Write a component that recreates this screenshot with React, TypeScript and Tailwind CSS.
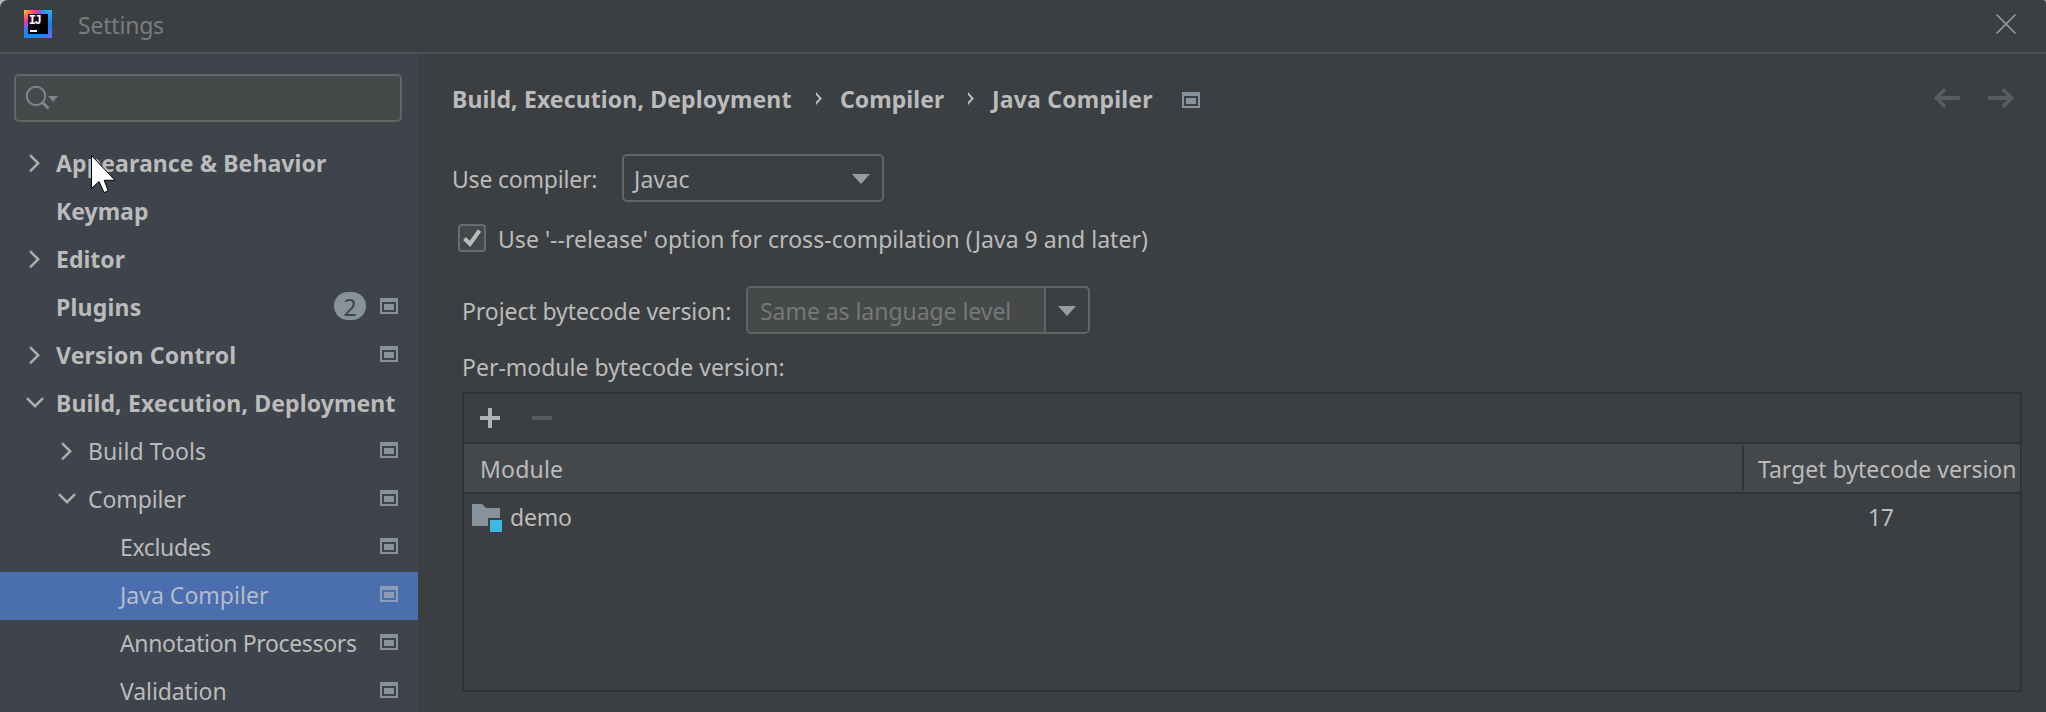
import type { ReactNode } from 'react';

type TreeItem = {
  label: string;
  level: 0 | 1 | 2;
  arrow?: 'right' | 'down';
  badge?: string;
  project?: boolean;
  selected?: boolean;
  tracking: string;
};

const tree: TreeItem[] = [
  { label: 'Appearance & Behavior', level: 0, arrow: 'right', tracking: 'tracking-[0.1px]' },
  { label: 'Keymap', level: 0, tracking: 'tracking-normal' },
  { label: 'Editor', level: 0, arrow: 'right', tracking: 'tracking-normal' },
  { label: 'Plugins', level: 0, badge: '2', project: true, tracking: 'tracking-[0.2px]' },
  { label: 'Version Control', level: 0, arrow: 'right', project: true, tracking: 'tracking-[0.2px]' },
  { label: 'Build, Execution, Deployment', level: 0, arrow: 'down', tracking: 'tracking-[0.12px]' },
  { label: 'Build Tools', level: 1, arrow: 'right', project: true, tracking: 'tracking-[0.1px]' },
  { label: 'Compiler', level: 1, arrow: 'down', project: true, tracking: 'tracking-[-0.1px]' },
  { label: 'Excludes', level: 2, project: true, tracking: 'tracking-[-0.35px]' },
  { label: 'Java Compiler', level: 2, project: true, selected: true, tracking: 'tracking-[0.02px]' },
  { label: 'Annotation Processors', level: 2, project: true, tracking: 'tracking-[-0.35px]' },
  { label: 'Validation', level: 2, project: true, tracking: 'tracking-[-0.1px]' },
];

const indent = ['pl-6', 'pl-14', 'pl-[88px]'];

function ProjectIcon({ className = 'text-[#87939a]' }: { className?: string }) {
  return (
    <svg width="18" height="16" viewBox="0 0 18 16" fill="currentColor" shapeRendering="crispEdges" className={`block shrink-0 ${className}`}>
      <path fillRule="evenodd" d="M0 0H18V16H0ZM2 4V14H16V4Z" />
      <rect x="4" y="6" width="10" height="6" />
    </svg>
  );
}

function TreeArrow({ dir }: { dir?: 'right' | 'down' }) {
  return (
    <svg width="32" height="48" viewBox="0 0 32 48" fill="none" stroke="#adadad" strokeWidth="2.5" className="block shrink-0">
      {dir === 'right' && <path d="M6 15.2 14.2 23.3 6 31.4" />}
      {dir === 'down' && <path d="M3 18.2 11 26.2 19 18.2" />}
    </svg>
  );
}

function Triangle() {
  return (
    <svg width="18" height="10" viewBox="0 0 18 10" className="block shrink-0">
      <path d="M0 0H18L9 10Z" fill="#9a9da0" />
    </svg>
  );
}

function CrumbArrow() {
  return (
    <svg width="6" height="14" viewBox="0 0 6 14" className="mt-[9px] block shrink-0">
      <path d="M0 0 6 6.4 0 13V10L3.3 6.4 0 3Z" fill="#bbbbbb" />
    </svg>
  );
}

function Logo() {
  return (
    <svg width="28" height="28" viewBox="0 0 28 28" className="mt-[10px] ml-6 block shrink-0">
      <defs>
        <linearGradient id="base" x1="1" y1="0" x2="0.6" y2="1">
          <stop offset="0" stopColor="#28b4f5" />
          <stop offset="0.45" stopColor="#1a7cf5" />
          <stop offset="1" stopColor="#1489f5" />
        </linearGradient>
        <radialGradient id="warm" cx="0" cy="0" r="0.8">
          <stop offset="0" stopColor="#fdc84a" />
          <stop offset="0.25" stopColor="#fb7a4c" />
          <stop offset="0.5" stopColor="#f0388a" />
          <stop offset="0.75" stopColor="#9a4fd8" stopOpacity="0.8" />
          <stop offset="1" stopColor="#3a78f5" stopOpacity="0" />
        </radialGradient>
        <radialGradient id="violet" cx="1" cy="1" r="0.5">
          <stop offset="0" stopColor="#8a5cf0" />
          <stop offset="1" stopColor="#3a78f5" stopOpacity="0" />
        </radialGradient>
        <radialGradient id="core" cx="0" cy="0" r="0.9">
          <stop offset="0" stopColor="#42103c" />
          <stop offset="1" stopColor="#000000" />
        </radialGradient>
      </defs>
      <rect width="28" height="28" fill="url(#base)" />
      <rect width="28" height="28" fill="url(#warm)" />
      <rect width="28" height="28" fill="url(#violet)" />
      <rect x="4" y="4" width="20" height="20" fill="url(#core)" />
      <text x="4.8" y="14" fontSize="12" fontWeight="700" letterSpacing="-1.4" fill="#fff" fontFamily="'Liberation Mono', monospace">IJ</text>
      <rect x="6" y="20" width="7" height="2" fill="#fff" />
    </svg>
  );
}

function Label({ children, className = '' }: { children: ReactNode; className?: string }) {
  return <span className={`block shrink-0 whitespace-pre ${className}`}>{children}</span>;
}

function TreeRow({ item }: { item: TreeItem }) {
  return (
    <div className={`flex h-12 items-start pr-5 ${indent[item.level]} ${item.selected ? 'bg-[#4b6eaf]' : ''}`}>
      <TreeArrow dir={item.arrow} />
      <Label className={`grow leading-[46px] ${item.tracking} ${item.level === 0 ? 'font-bold' : ''} ${item.selected ? 'text-[#b5bccb]' : ''}`}>{item.label}</Label>
      {item.badge && (
        <span className="mt-2 mr-[14px] block h-7 w-8 rounded-[14px] bg-[#87939a] text-center leading-[30px] text-[#3f434b]">{item.badge}</span>
      )}
      {item.project && (
        <span className="mt-[14px] block">
          <ProjectIcon className={item.selected ? 'text-[#8c9db5]' : 'text-[#87939a]'} />
        </span>
      )}
    </div>
  );
}

function Sidebar() {
  return (
    <aside className="flex w-[418px] shrink-0 flex-col bg-[#3f434b] pt-5">
      <div className="mr-4 ml-[14px] h-12 shrink-0 rounded-[5px] border-2 border-[#646464] bg-[#45494a]">
        <svg width="44" height="44" viewBox="0 0 44 44" fill="none" className="block">
          <circle cx="20" cy="20" r="9.2" stroke="#7b878d" strokeWidth="2" />
          <path d="M26 26 32.5 32.5" stroke="#7b878d" strokeWidth="3" />
          <path d="M32 20H42L37 26Z" fill="#7b878d" />
        </svg>
      </div>
      <nav className="mt-[18px] flex flex-col">
        {tree.map((item, i) => (
          <TreeRow key={i} item={item} />
        ))}
      </nav>
    </aside>
  );
}

function ModuleTable() {
  return (
    <section className="mt-[9px] ml-11 flex h-[300px] w-[1560px] flex-col border-2 border-[#323232]">
      <div className="flex h-[50px] shrink-0 items-start border-b-2 border-[#323232]">
        <svg width="20" height="20" viewBox="0 0 20 20" shapeRendering="crispEdges" className="mt-[14px] ml-4 block">
          <path d="M8 0H12V8H20V12H12V20H8V12H0V8H8Z" fill="#afb1b3" />
        </svg>
        <span className="mt-[22px] ml-8 block h-1 w-5 bg-[#5b5c5e]" />
      </div>
      <div className="flex h-[50px] shrink-0 items-start border-b-2 border-[#323232] bg-[#45484a] leading-[50px]">
        <Label className="w-[1278px] pl-4 tracking-[0.2px]">Module</Label>
        <span className="mt-0.5 block h-11 w-0.5 shrink-0 bg-[#323232]" />
        <Label className="pl-[14px]">Target bytecode version</Label>
      </div>
      <div className="flex h-12 items-start leading-[46px]">
        <svg width="30" height="28" viewBox="0 0 30 28" className="mt-[10px] ml-2 block shrink-0">
          <path d="M0 0H10L14 4H28V14H16V22H0Z" fill="#87939a" />
          <rect x="18" y="16" width="12" height="12" fill="#40b6e0" />
        </svg>
        <Label className="ml-2 w-[1358px] tracking-[-0.2px]">demo</Label>
        <Label className="tracking-[-0.3px]">17</Label>
      </div>
    </section>
  );
}

function NavArrow({ className = '' }: { className?: string }) {
  return (
    <svg width="26" height="20" viewBox="0 0 26 20" fill="none" stroke="#5b5c5e" className={`mt-[5px] block shrink-0 ${className}`}>
      <path d="M3 10H26" strokeWidth="4" />
      <path d="M11.2 1.2 2.4 10 11.2 18.8" strokeWidth="3.6" />
    </svg>
  );
}

function Content() {
  return (
    <main className="flex grow flex-col bg-[#3c3f41] pt-[29px]">
      <div className="flex h-8 items-start pl-[34px] font-bold leading-8">
        <Label className="w-[364px] tracking-[0.12px]">Build, Execution, Deployment</Label>
        <CrumbArrow />
        <Label className="ml-[18px] w-32 tracking-[0.05px]">Compiler</Label>
        <CrumbArrow />
        <Label className="ml-[18px] w-[190px] tracking-[0.2px]">Java Compiler</Label>
        <span className="mt-[9px] block">
          <ProjectIcon />
        </span>
        <NavArrow className="ml-[734px]" />
        <NavArrow className="ml-7 -scale-x-100" />
      </div>

      <div className="mt-[39px] flex h-12 items-start pl-[34px]">
        <Label className="w-[170px] leading-[50px] tracking-[-0.2px]">Use compiler:</Label>
        <div className="flex h-12 w-[262px] items-start rounded-[5px] border-2 border-[#646464]">
          <Label className="w-[228px] pl-[10px] leading-[46px] tracking-[0.2px]">Javac</Label>
          <span className="mt-[18px] block">
            <Triangle />
          </span>
        </div>
      </div>

      <div className="mt-[21px] flex h-8 items-start pl-10 leading-8">
        <span className="mt-px block h-7 w-7 shrink-0 rounded-[4px] border-2 border-[#6b6b6b] bg-[#43494a]">
          <svg width="24" height="24" viewBox="0 0 24 24" fill="none" className="block">
            <path d="M4.5 12.5 10 18 19.5 4.5" stroke="#bbbbbb" strokeWidth="4" />
          </svg>
        </span>
        <Label className="ml-3 tracking-[0.03px]">Use '--release' option for cross-compilation (Java 9 and later)</Label>
      </div>

      <div className="mt-[31px] flex h-12 items-start pl-11">
        <Label className="w-[284px] leading-[50px] tracking-[-0.08px]">Project bytecode version:</Label>
        <div className="flex h-12 w-[344px] items-start overflow-hidden rounded-[5px] border-2 border-[#646464]">
          <div className="h-full w-[298px] shrink-0 border-r-2 border-[#646464] bg-[#45494a] pl-3 text-[#777777]">
            <Label className="leading-[46px] tracking-[-0.05px]">Same as language level</Label>
          </div>
          <span className="mt-[18px] ml-3 block">
            <Triangle />
          </span>
        </div>
      </div>

      <Label className="mt-[17px] pl-11 leading-8">Per-module bytecode version:</Label>
      <ModuleTable />
    </main>
  );
}

export default function App() {
  return (
    <div className="relative h-[712px] w-[2046px] overflow-hidden bg-[#b4b8ba] font-['Noto_Sans','Open_Sans',sans-serif] text-[23px] text-[#bbbbbb]">
      <div className="flex h-full flex-col overflow-hidden rounded-tl-[8px] rounded-tr-[3px] bg-[#3c3f41]">
        <header className="flex h-[54px] shrink-0 items-start border-b-2 border-[#515151]">
          <Logo />
          <Label className="mt-[9px] ml-[26px] leading-8 tracking-[-0.2px] text-[#7a7b7c]">Settings</Label>
          <svg width="20" height="20" viewBox="0 0 20 20" fill="none" stroke="#8f9192" strokeWidth="1.8" className="mt-[14px] mr-[30px] ml-auto block">
            <path d="M0.5 0.5 19.5 19.5M19.5 0.5 0.5 19.5" />
          </svg>
        </header>
        <div className="flex min-h-0 grow">
          <Sidebar />
          <Content />
        </div>
      </div>
      <svg width="26" height="40" viewBox="0 0 26 40" className="absolute top-[154px] left-[90px] block">
        <path d="M1.5 1.5V34.5L9 27.5 14 38.5 18.3 37 14.2 26.3H25Z" fill="#fff" stroke="#000" strokeWidth="1" />
      </svg>
    </div>
  );
}
